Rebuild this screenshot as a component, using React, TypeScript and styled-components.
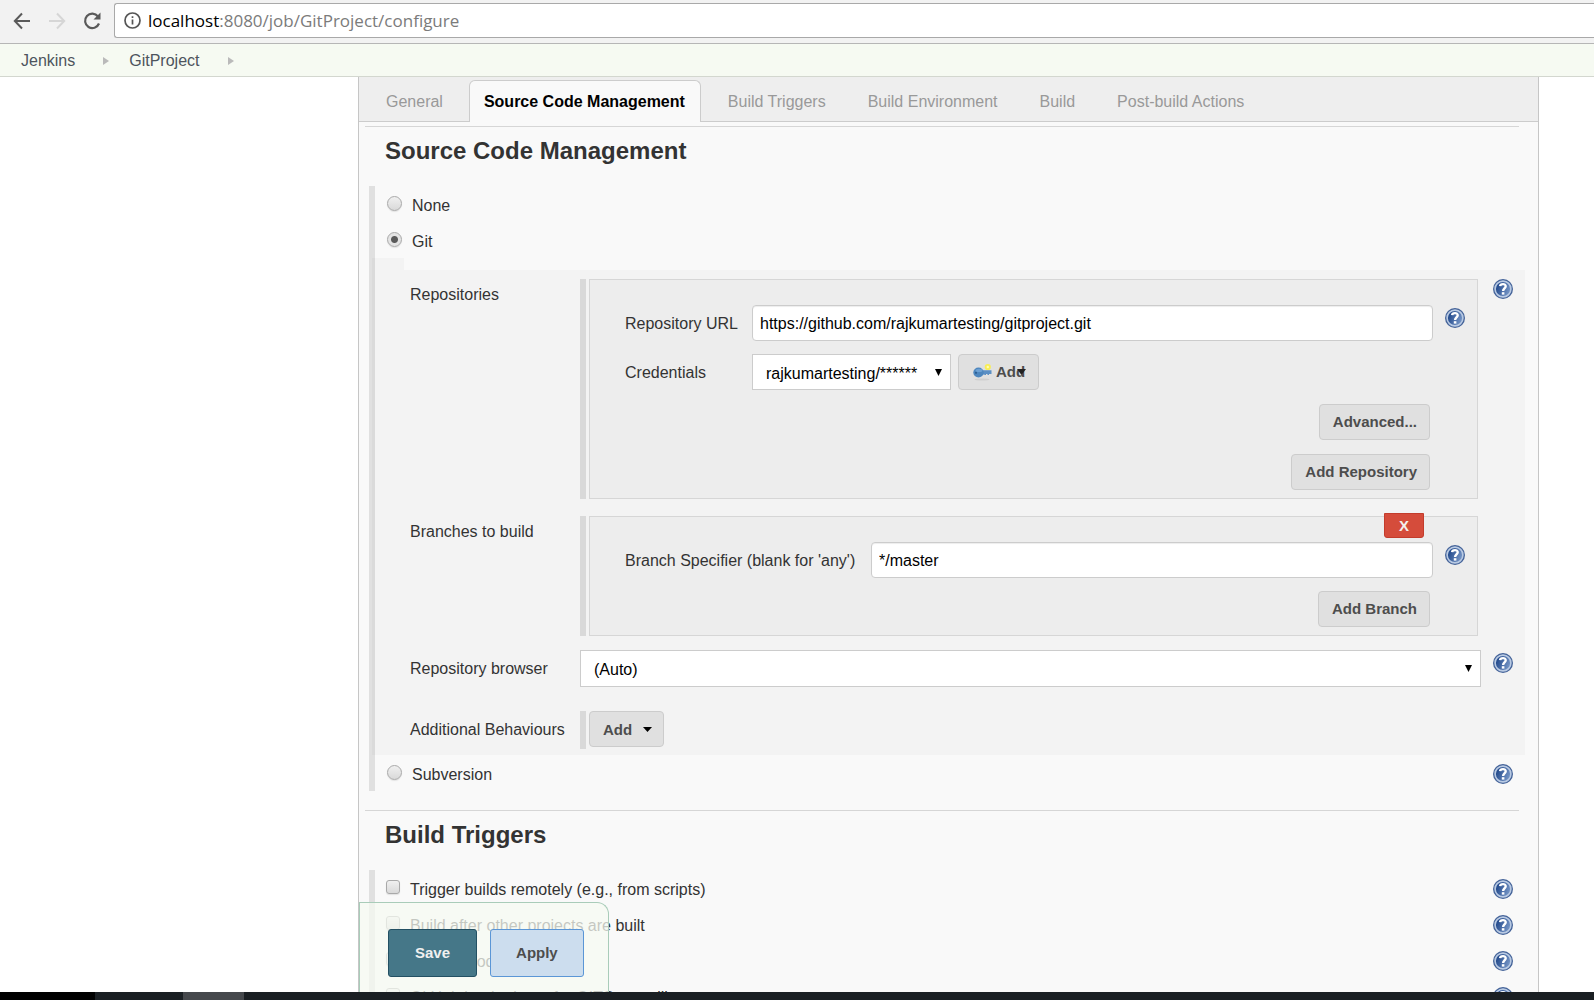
import React from 'react';
import styled, { createGlobalStyle, css } from 'styled-components';

const GlobalStyle = createGlobalStyle`
  *, *::before, *::after { box-sizing: border-box; }
  html, body { margin: 0; background: #fff; overflow: hidden; }
  body, button, input, select {
    font-family: "Liberation Sans", Arial, Helvetica, sans-serif;
    font-size: 16px;
    line-height: 20px;
    color: #333;
  }
  a { color: inherit; text-decoration: none; }
`;

const Screen = styled.div`
  display: flex;
  flex-direction: column;
  height: 100vh;
  overflow: hidden;
`;

/* ---------- browser chrome ---------- */

const BrowserBar = styled.header`
  display: flex;
  align-items: center;
  flex: none;
  height: 44px;
  padding: 0 0 2px 12px;
  background: #f2f2f2;
  border-bottom: 1px solid #b6b6b6;
`;

const NavButtons = styled.div`
  display: flex;
  gap: 15px;
  width: 102px;
`;

const NavButton = styled.button`
  display: flex;
  width: 20px;
  height: 20px;
  padding: 0;
  border: 0;
  background: none;
  color: #5a5a5a;
  &:disabled { color: #d6d6d6; }
`;

const AddressBox = styled.div`
  display: flex;
  align-items: center;
  flex: 1;
  gap: 7px;
  height: 35px;
  padding-left: 9px;
  background: #fff;
  border: 1px solid #a9a9a9;
  border-right: 0;
  border-radius: 3px 0 0 3px;
  font-family: "Open Sans", "Noto Sans", sans-serif;
  font-size: 17px;
  color: #7b7b7b;
  b { font-weight: 400; color: #000; }
`;

/* ---------- breadcrumbs and tabs ---------- */

const Breadcrumbs = styled.nav`
  display: flex;
  align-items: center;
  flex: none;
  height: 33px;
  padding: 1px 0 0 21px;
  background: #f6faf2;
  border-bottom: 1px solid #d3d7cf;
  color: #4d545d;
`;

const Crumb = styled.a`
  margin-right: 28px;
`;

const CrumbArrow = styled.span`
  margin-right: 20px;
  border: solid transparent;
  border-width: 4px 0 4px 6px;
  border-left-color: #bababa;
`;

const Viewport = styled.main`
  position: relative;
  flex: 1;
  min-height: 0;
  padding: 0 55px 0 358px;
  overflow: hidden;
`;

const Panel = styled.form`
  min-height: 100%;
  background: #f9f9f9;
  border: solid #c6c6c6;
  border-width: 0 1px;
`;

const TabBar = styled.div`
  display: flex;
  align-items: flex-end;
  height: 45px;
  padding-left: 6px;
  background: #eee;
  border-bottom: 1px solid #ccc;
`;

const Tab = styled.button<{ $active?: boolean }>`
  height: 41px;
  padding: 2px 21px 0;
  border: 0;
  background: none;
  color: #999;
  white-space: nowrap;
  ${p => p.$active && css`
    height: 42px;
    margin: 0 6px -1px 5px;
    padding: 0 15px 0 14px;
    background: #f9f9f9;
    border: solid #ccc;
    border-width: 1px 1px 0;
    border-radius: 6px 6px 0 0;
    font-weight: 700;
    color: #000;
  `}
`;

/* ---------- sections ---------- */

const Section = styled.section`
  margin: 4px 0 19px 6px;
`;

const Title = styled.h2`
  height: 60px;
  margin: 0 19px 0 0;
  padding: 10px 20px 0;
  border-top: 1px solid #d6d6d6;
  font-size: 24px;
  line-height: 28px;
`;

const OptionGroup = styled.div`
  margin: 0 13px 0 4px;
  background: linear-gradient(#e0e0e0, #e0e0e0) left / 6px 100% no-repeat;
`;

const OptionRow = styled.div`
  display: flex;
  align-items: flex-start;
  height: 36px;
  padding: 9px 12px 0 17px;
`;

const OptionLabel = styled.label`
  display: flex;
  flex: 1;
  gap: 10px;
  padding-top: 1px;
`;

const Choice = styled.input`
  appearance: none;
  flex: none;
  width: 14px;
  height: 14px;
  margin: 0;
  background: linear-gradient(#f0f0f0, #d9d9d9);
  border: 1px solid #a9a9a9;
  border-radius: 3px;
  box-shadow: 0 1px 1px #e2e2e2;
  &[type='radio'] {
    width: 15px;
    height: 15px;
    margin-left: 1px;
    border-radius: 50%;
  }
  &[type='radio']:checked {
    background: radial-gradient(circle, #5a5a5a 3px, #e4e4e4 4px);
  }
`;

const HelpButton = styled.button`
  display: flex;
  flex: none;
  width: 20px;
  height: 20px;
  padding: 0;
  border: 0;
  background: none;
`;

const Nub = styled.div`
  width: 32px;
  height: 12px;
  margin-left: 3px;
  background: rgba(0, 0, 0, 0.024);
`;

const GitSettings = styled.div`
  display: grid;
  grid-template-columns: 170px minmax(0, 1fr) 20px;
  margin-left: 3px;
  padding: 9px 12px 6px 38px;
  background: rgba(0, 0, 0, 0.024);
`;

const FieldName = styled.label<{ $top: number }>`
  padding-top: ${p => p.$top}px;
  white-space: nowrap;
`;

const HelpCell = styled.div`
  padding-top: 3px;
`;

const Repeatable = styled.div<{ $gap: number }>`
  display: flex;
  gap: 3px;
  margin-bottom: ${p => p.$gap}px;
  padding-right: 15px;
  &::before {
    content: '';
    flex: none;
    width: 6px;
    background: #d9d9d9;
  }
`;

const Chunk = styled.div`
  position: relative;
  flex: 1;
  min-width: 0;
  padding: 25px 12px 8px 35px;
  background: #ededed;
  border: 1px solid #d6d6d6;
`;

const FieldRow = styled.div<{ $label: number; $gap?: number }>`
  display: grid;
  grid-template-columns: ${p => p.$label}px minmax(0, 1fr) 20px;
  column-gap: 12px;
  align-items: start;
  margin-bottom: ${p => p.$gap ?? 13}px;
  > label { height: 36px; line-height: 38px; margin-right: -12px; white-space: nowrap; }
  > button { margin-top: 3px; }
`;

const TextBox = styled.input`
  width: 100%;
  height: 36px;
  padding: 2px 7px 0;
  background: #fff;
  border: 1px solid #ccc;
  border-radius: 4px;
  box-shadow: inset 0 1px 1px rgba(0, 0, 0, 0.075);
  color: #000;
`;

const SelectBox = styled.select<{ $width?: string; $height?: number }>`
  appearance: none;
  width: ${p => p.$width ?? '100%'};
  height: ${p => p.$height ?? 36}px;
  padding: 3px 13px 0;
  border: 1px solid #ccc;
  border-radius: 0;
  color: #000;
  background: #fff;
`;

const SelectWrap = styled.span`
  position: relative;
  display: flex;
  svg { position: absolute; right: 9px; top: 15px; pointer-events: none; }
`;

const Inline = styled.div`
  display: flex;
  gap: 7px;
`;

const BrowserField = styled.div`
  margin-bottom: 24px;
  padding-right: 12px;
`;

const Button = styled.button`
  display: inline-flex;
  align-items: center;
  height: 36px;
  padding: 0 12px 1px 13px;
  background: #e0e0e0;
  border: 1px solid #ccc;
  border-radius: 4px;
  font-size: 15px;
  font-weight: 700;
  color: #4d4d4d;
  white-space: nowrap;
`;

const Actions = styled.div`
  display: flex;
  flex-direction: column;
  align-items: flex-end;
  gap: 14px;
  padding-right: 35px;
`;

const KeyButton = styled(Button)`
  position: relative;
  gap: 4px;
  width: 81px;
  padding-left: 14px;
`;

const OverlaidCaret = styled.svg`
  position: absolute;
  right: 12px;
  top: 14px;
`;

const MenuButton = styled(Button)`
  gap: 11px;
  margin-bottom: 2px;
  padding: 1px 11px 0 13px;
`;

const DeleteButton = styled.button`
  position: absolute;
  top: -4px;
  right: 53px;
  width: 40px;
  height: 25px;
  padding: 0;
  background: #d54c3b;
  border: 1px solid #c33c2c;
  border-radius: 0 0 3px 3px;
  font-size: 15px;
  font-weight: 700;
  color: #f3efee;
`;

/* ---------- floating save bar ---------- */

const SaveBar = styled.div`
  position: absolute;
  left: 359px;
  bottom: 0;
  display: flex;
  gap: 13px;
  width: 250px;
  height: 90px;
  padding: 26px 0 0 28px;
  background: rgba(246, 250, 242, 0.75);
  border: solid #a9ccb9;
  border-width: 1px 1px 0;
  border-radius: 0 12px 0 0;
`;

const SubmitButton = styled.button<{ $primary?: boolean }>`
  height: 48px;
  padding: 0 ${p => (p.$primary ? 26 : 25)}px;
  background: ${p => (p.$primary ? '#457788' : '#ccddee')};
  border: 1px solid ${p => (p.$primary ? '#235063' : '#5b96d6')};
  border-radius: 3px;
  font-size: 15px;
  font-weight: 700;
  color: ${p => (p.$primary ? '#f0f0f0' : '#4d4d4d')};
`;

const Taskbar = styled.footer`
  display: flex;
  flex: none;
  height: 8px;
  background: #1a1f23;
`;

const TaskItem = styled.span<{ $width: number; $color: string }>`
  width: ${p => p.$width}px;
  background: ${p => p.$color};
`;

/* ---------- drawings ---------- */

const Help = ({ topic }: { topic: string }) => (
  <HelpButton type="button" aria-label={`Help for feature: ${topic}`}>
    <svg width="20" height="20" viewBox="0 0 20 20">
      <defs>
        <linearGradient id="helpFill" x1="0" y1="0.3" x2="1" y2="0.7">
          <stop offset="0.1" stopColor="#234a8c" />
          <stop offset="1" stopColor="#7d9ccb" />
        </linearGradient>
      </defs>
      <circle cx="10" cy="10" r="10" fill="#436298" />
      <circle cx="10" cy="10" r="7.9" fill="url(#helpFill)" stroke="#b9cae3" strokeWidth="1.6" />
      <path d="M7.1 7.2C7.3 4.4 12.8 4.4 12.7 7.2C12.7 9.3 10.1 9.5 10.1 12" fill="none" stroke="#fff" strokeWidth="2.4" />
      <rect x="8.8" y="13.2" width="2.6" height="2.4" fill="#fff" />
    </svg>
  </HelpButton>
);

const SelectArrow = () => (
  <svg width="7" height="7" viewBox="0 0 7 7"><path d="M0 0H7L3.5 7Z" fill="#000" /></svg>
);

const KeyIcon = () => (
  <svg width="19" height="18" viewBox="0 0 19 18">
    <ellipse cx="9" cy="16.5" rx="7.5" ry="1" fill="#cfcfcf" />
    <path d="M8 7.2H18.5V11H16V12H14.5V11H13V12H11.5V11.5H8Z" fill="#5b8fc4" />
    <ellipse cx="5.5" cy="9.5" rx="5.2" ry="4.9" fill="#4d86be" />
    <ellipse cx="6" cy="7.4" rx="3.4" ry="1.6" fill="#6da0d2" />
    <circle cx="3" cy="9.8" r="1.1" fill="#2b5d92" />
    <circle cx="14.8" cy="4" r="3.1" fill="#f8ee55" />
    <circle cx="14.8" cy="4" r="1.2" fill="#fffbb5" />
  </svg>
);

const TABS = ['General', 'Source Code Management', 'Build Triggers', 'Build Environment', 'Build', 'Post-build Actions'];

const TRIGGERS = [
  'Trigger builds remotely (e.g., from scripts)',
  'Build after other projects are built',
  'Build periodically',
  'GitHub hook trigger for GITScm polling',
];

const ScmOption = ({ name, checked, help }: { name: string; checked?: boolean; help?: boolean }) => (
  <OptionRow>
    <OptionLabel>
      <Choice type="radio" name="scm" defaultChecked={checked} />
      {name}
    </OptionLabel>
    {help && <Help topic={name} />}
  </OptionRow>
);

export default function App() {
  return (
    <Screen>
      <GlobalStyle />
      <BrowserBar>
        <NavButtons>
          <NavButton type="button" aria-label="Back">
            <svg width="20" height="20" viewBox="0 0 20 20" fill="none" stroke="currentColor" strokeWidth="2">
              <path d="M18 10H3M10 2.5L2.8 10L10 17.5" />
            </svg>
          </NavButton>
          <NavButton type="button" aria-label="Forward" disabled>
            <svg width="20" height="20" viewBox="0 0 20 20" fill="none" stroke="currentColor" strokeWidth="2">
              <path d="M2 10H17M10 2.5L17.2 10L10 17.5" />
            </svg>
          </NavButton>
          <NavButton type="button" aria-label="Reload">
            <svg width="20" height="20" viewBox="0 0 20 20" fill="none" stroke="currentColor" strokeWidth="2.2">
              <path d="M16 5.5A7.2 7.2 0 1 0 17 12.5" />
              <path d="M18.5 1.5V8.5H11.5Z" fill="currentColor" stroke="none" />
            </svg>
          </NavButton>
        </NavButtons>
        <AddressBox>
          <svg width="17" height="17" viewBox="0 0 17 17" fill="none" stroke="#555" strokeWidth="1.7">
            <circle cx="8.5" cy="8.5" r="7.5" />
            <path d="M8.5 7.5V12.5M8.5 4.3V6.1" />
          </svg>
          <span><b>localhost</b>:8080/job/GitProject/configure</span>
        </AddressBox>
      </BrowserBar>

      <Breadcrumbs>
        <Crumb href="#jenkins">Jenkins</Crumb>
        <CrumbArrow />
        <Crumb href="#project">GitProject</Crumb>
        <CrumbArrow />
      </Breadcrumbs>

      <Viewport>
        <Panel>
          <TabBar>
            {TABS.map(tab => (
              <Tab key={tab} type="button" $active={tab === 'Source Code Management'}>{tab}</Tab>
            ))}
          </TabBar>

          <Section>
            <Title>Source Code Management</Title>
            <OptionGroup>
              <ScmOption name="None" />
              <ScmOption name="Git" checked />
              <Nub />
              <GitSettings>
                <FieldName as="span" $top={6}>Repositories</FieldName>
                <Repeatable $gap={17}>
                  <Chunk>
                    <FieldRow $label={115}>
                      <label htmlFor="url">Repository URL</label>
                      <TextBox id="url" defaultValue="https://github.com/rajkumartesting/gitproject.git" />
                      <Help topic="Repository URL" />
                    </FieldRow>
                    <FieldRow $label={115} $gap={14}>
                      <label htmlFor="credentials">Credentials</label>
                      <Inline>
                        <SelectWrap>
                          <SelectBox id="credentials" $width="199px">
                            <option>rajkumartesting/******</option>
                          </SelectBox>
                          <SelectArrow />
                        </SelectWrap>
                        <KeyButton type="button">
                          <KeyIcon />
                          Add
                          <OverlaidCaret width="9" height="6" viewBox="0 0 9 6"><path d="M0 0H9L4.5 6Z" fill="#222" /></OverlaidCaret>
                        </KeyButton>
                      </Inline>
                    </FieldRow>
                    <Actions>
                      <Button type="button">Advanced...</Button>
                      <Button type="button">Add Repository</Button>
                    </Actions>
                  </Chunk>
                </Repeatable>
                <Help topic="Repositories" />

                <FieldName as="span" $top={6}>Branches to build</FieldName>
                <Repeatable $gap={14}>
                  <Chunk>
                    <DeleteButton type="button">X</DeleteButton>
                    <FieldRow $label={234}>
                      <label htmlFor="branch">Branch Specifier (blank for 'any')</label>
                      <TextBox id="branch" defaultValue="*/master" />
                      <Help topic="Branch Specifier" />
                    </FieldRow>
                    <Actions>
                      <Button type="button">Add Branch</Button>
                    </Actions>
                  </Chunk>
                </Repeatable>
                <span />

                <FieldName htmlFor="browser" $top={9}>Repository browser</FieldName>
                <BrowserField>
                  <SelectWrap>
                    <SelectBox id="browser" $height={37}>
                      <option>(Auto)</option>
                    </SelectBox>
                    <SelectArrow />
                  </SelectWrap>
                </BrowserField>
                <HelpCell><Help topic="Repository browser" /></HelpCell>

                <FieldName as="span" $top={9}>Additional Behaviours</FieldName>
                <Repeatable $gap={0}>
                  <MenuButton type="button">
                    Add
                    <svg width="9" height="5" viewBox="0 0 9 5"><path d="M0 0H9L4.5 5Z" fill="#000" /></svg>
                  </MenuButton>
                </Repeatable>
              </GitSettings>
              <ScmOption name="Subversion" help />
            </OptionGroup>
          </Section>

          <Section>
            <Title>Build Triggers</Title>
            <OptionGroup>
              {TRIGGERS.map(name => (
                <OptionRow key={name}>
                  <OptionLabel>
                    <Choice type="checkbox" />
                    {name}
                  </OptionLabel>
                  <Help topic={name} />
                </OptionRow>
              ))}
            </OptionGroup>
          </Section>
        </Panel>
        <SaveBar>
          <SubmitButton type="button" $primary>Save</SubmitButton>
          <SubmitButton type="button">Apply</SubmitButton>
        </SaveBar>
      </Viewport>

      <Taskbar>
        <TaskItem $width={95} $color="#000" />
        <TaskItem $width={88} $color="#1a1f23" />
        <TaskItem $width={61} $color="#45484c" />
      </Taskbar>
    </Screen>
  );
}
